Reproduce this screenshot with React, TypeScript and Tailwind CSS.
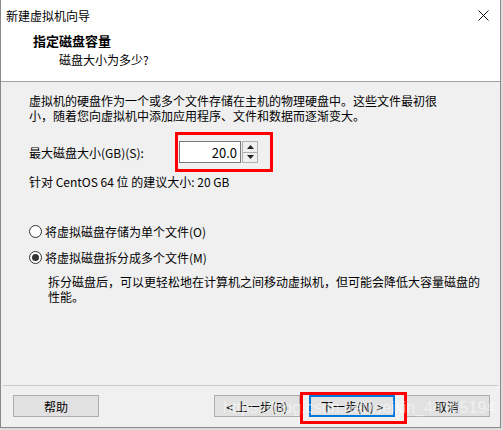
const FONT = "font-['Microsoft_YaHei','Noto_Sans_CJK_SC',sans-serif]"

function Radio({ checked, label }: { checked?: boolean; label: string }) {
  return (
    <div className="flex items-center h-[16px]">
      <span className="flex items-center justify-center w-[13px] h-[13px] rounded-full border border-[#333] bg-white shrink-0">
        {checked ? <span className="w-[7px] h-[7px] rounded-full bg-[#333]" /> : null}
      </span>
      <span className="ml-[3px]">{label}</span>
    </div>
  )
}

function Btn({ label, primary }: { label: string; primary?: boolean }) {
  return (
    <button
      type="button"
      className={`w-[86px] h-[22px] bg-[#e1e1e1] text-[12px] text-black flex items-center justify-center ${
        primary ? "border-2 border-[#0078d7]" : "border border-[#adadad]"
      }`}
    >
      {label}
    </button>
  )
}

export default function App() {
  return (
    <div className={`w-[503px] h-[430px] bg-[#dcdcdc] text-black text-[12px] leading-[15px] ${FONT}`}>
      <div className="relative w-[501px] h-[428px] bg-[#f0f0f0] border-l border-r border-b border-[#8a8a8a] flex flex-col">
        {/* title bar */}
        <div className="h-[30px] bg-white flex items-center justify-between pl-[5px] pr-[9px]">
          <span>新建虚拟机向导</span>
          <svg width="11" height="11" viewBox="0 0 11 11" className="mr-[2px]">
            <path d="M0.5 0.5 L10.5 10.5 M10.5 0.5 L0.5 10.5" stroke="#111" strokeWidth="1" />
          </svg>
        </div>

        {/* header */}
        <div className="h-[52px] bg-white border-b border-[#a0a0a0] pl-[32px] pt-[3px]">
          <p className="font-bold text-[13px] leading-[16px]">指定磁盘容量</p>
          <p className="pl-[26px] mt-[3px]">磁盘大小为多少?</p>
        </div>

        {/* body */}
        <div className="flex-1 px-[28px] pt-[11px] whitespace-nowrap">
          <p>
            虚拟机的硬盘作为一个或多个文件存储在主机的物理硬盘中。这些文件最初很
            <br />
            小，随着您向虚拟机中添加应用程序、文件和数据而逐渐变大。
          </p>

          <div className="flex items-center mt-[9px] h-[40px]">
            <span className="w-[146px]">最大磁盘大小(GB)(S):</span>
            <div className="flex items-center h-[40px] border-[3px] border-[#ff0000] pl-[1px] pr-[12px]">
              <div className="w-[62px] h-[22px] bg-white border border-[#7a7a7a] flex items-center justify-end pr-[3px] text-[13px]">
                20.0
              </div>
              <div className="flex flex-col w-[16px] h-[22px] ml-[1px]">
                <div className="flex-1 flex items-center justify-center bg-[#f0f0f0] border border-[#b0b0b0]">
                  <svg width="7" height="4" viewBox="0 0 7 4">
                    <path d="M3.5 0 L7 4 L0 4 Z" fill="#222" />
                  </svg>
                </div>
                <div className="flex-1 flex items-center justify-center bg-[#f0f0f0] border border-t-0 border-[#b0b0b0]">
                  <svg width="7" height="4" viewBox="0 0 7 4">
                    <path d="M0 0 L7 0 L3.5 4 Z" fill="#222" />
                  </svg>
                </div>
              </div>
            </div>
          </div>

          <p className="mt-[2px]">针对 CentOS 64 位 的建议大小: 20 GB</p>

          <div className="mt-[34px] flex flex-col gap-[10px]">
            <Radio label="将虚拟磁盘存储为单个文件(O)" />
            <Radio checked label="将虚拟磁盘拆分成多个文件(M)" />
          </div>

          <p className="pl-[19px] mt-[9px]">
            拆分磁盘后，可以更轻松地在计算机之间移动虚拟机，但可能会降低大容量磁盘的
            <br />
            性能。
          </p>
        </div>

        {/* footer */}
        <div className="border-t border-[#c8c8c8] mx-[2px] h-[42px] flex items-center justify-between pl-[10px] pr-[8px] pb-[1px]">
          <Btn label="帮助" />
          <div className="flex gap-[9px]">
            <Btn label="< 上一步(B)" />
            <Btn label="下一步(N) >" primary />
            <Btn label="取消" />
          </div>
        </div>

        {/* annotation around the next button */}
        <div className="absolute left-[299px] top-[392px] w-[107px] h-[32px] border-[3px] border-[#ff0000] pointer-events-none" />

        {/* watermark */}
        <div className="absolute left-[222px] top-[399px] text-[16px] leading-[18px] text-white/50 font-['Liberation_Sans',sans-serif] pointer-events-none">
          https://blog.csdn.net/weixin_44165194
        </div>
      </div>
    </div>
  )
}
